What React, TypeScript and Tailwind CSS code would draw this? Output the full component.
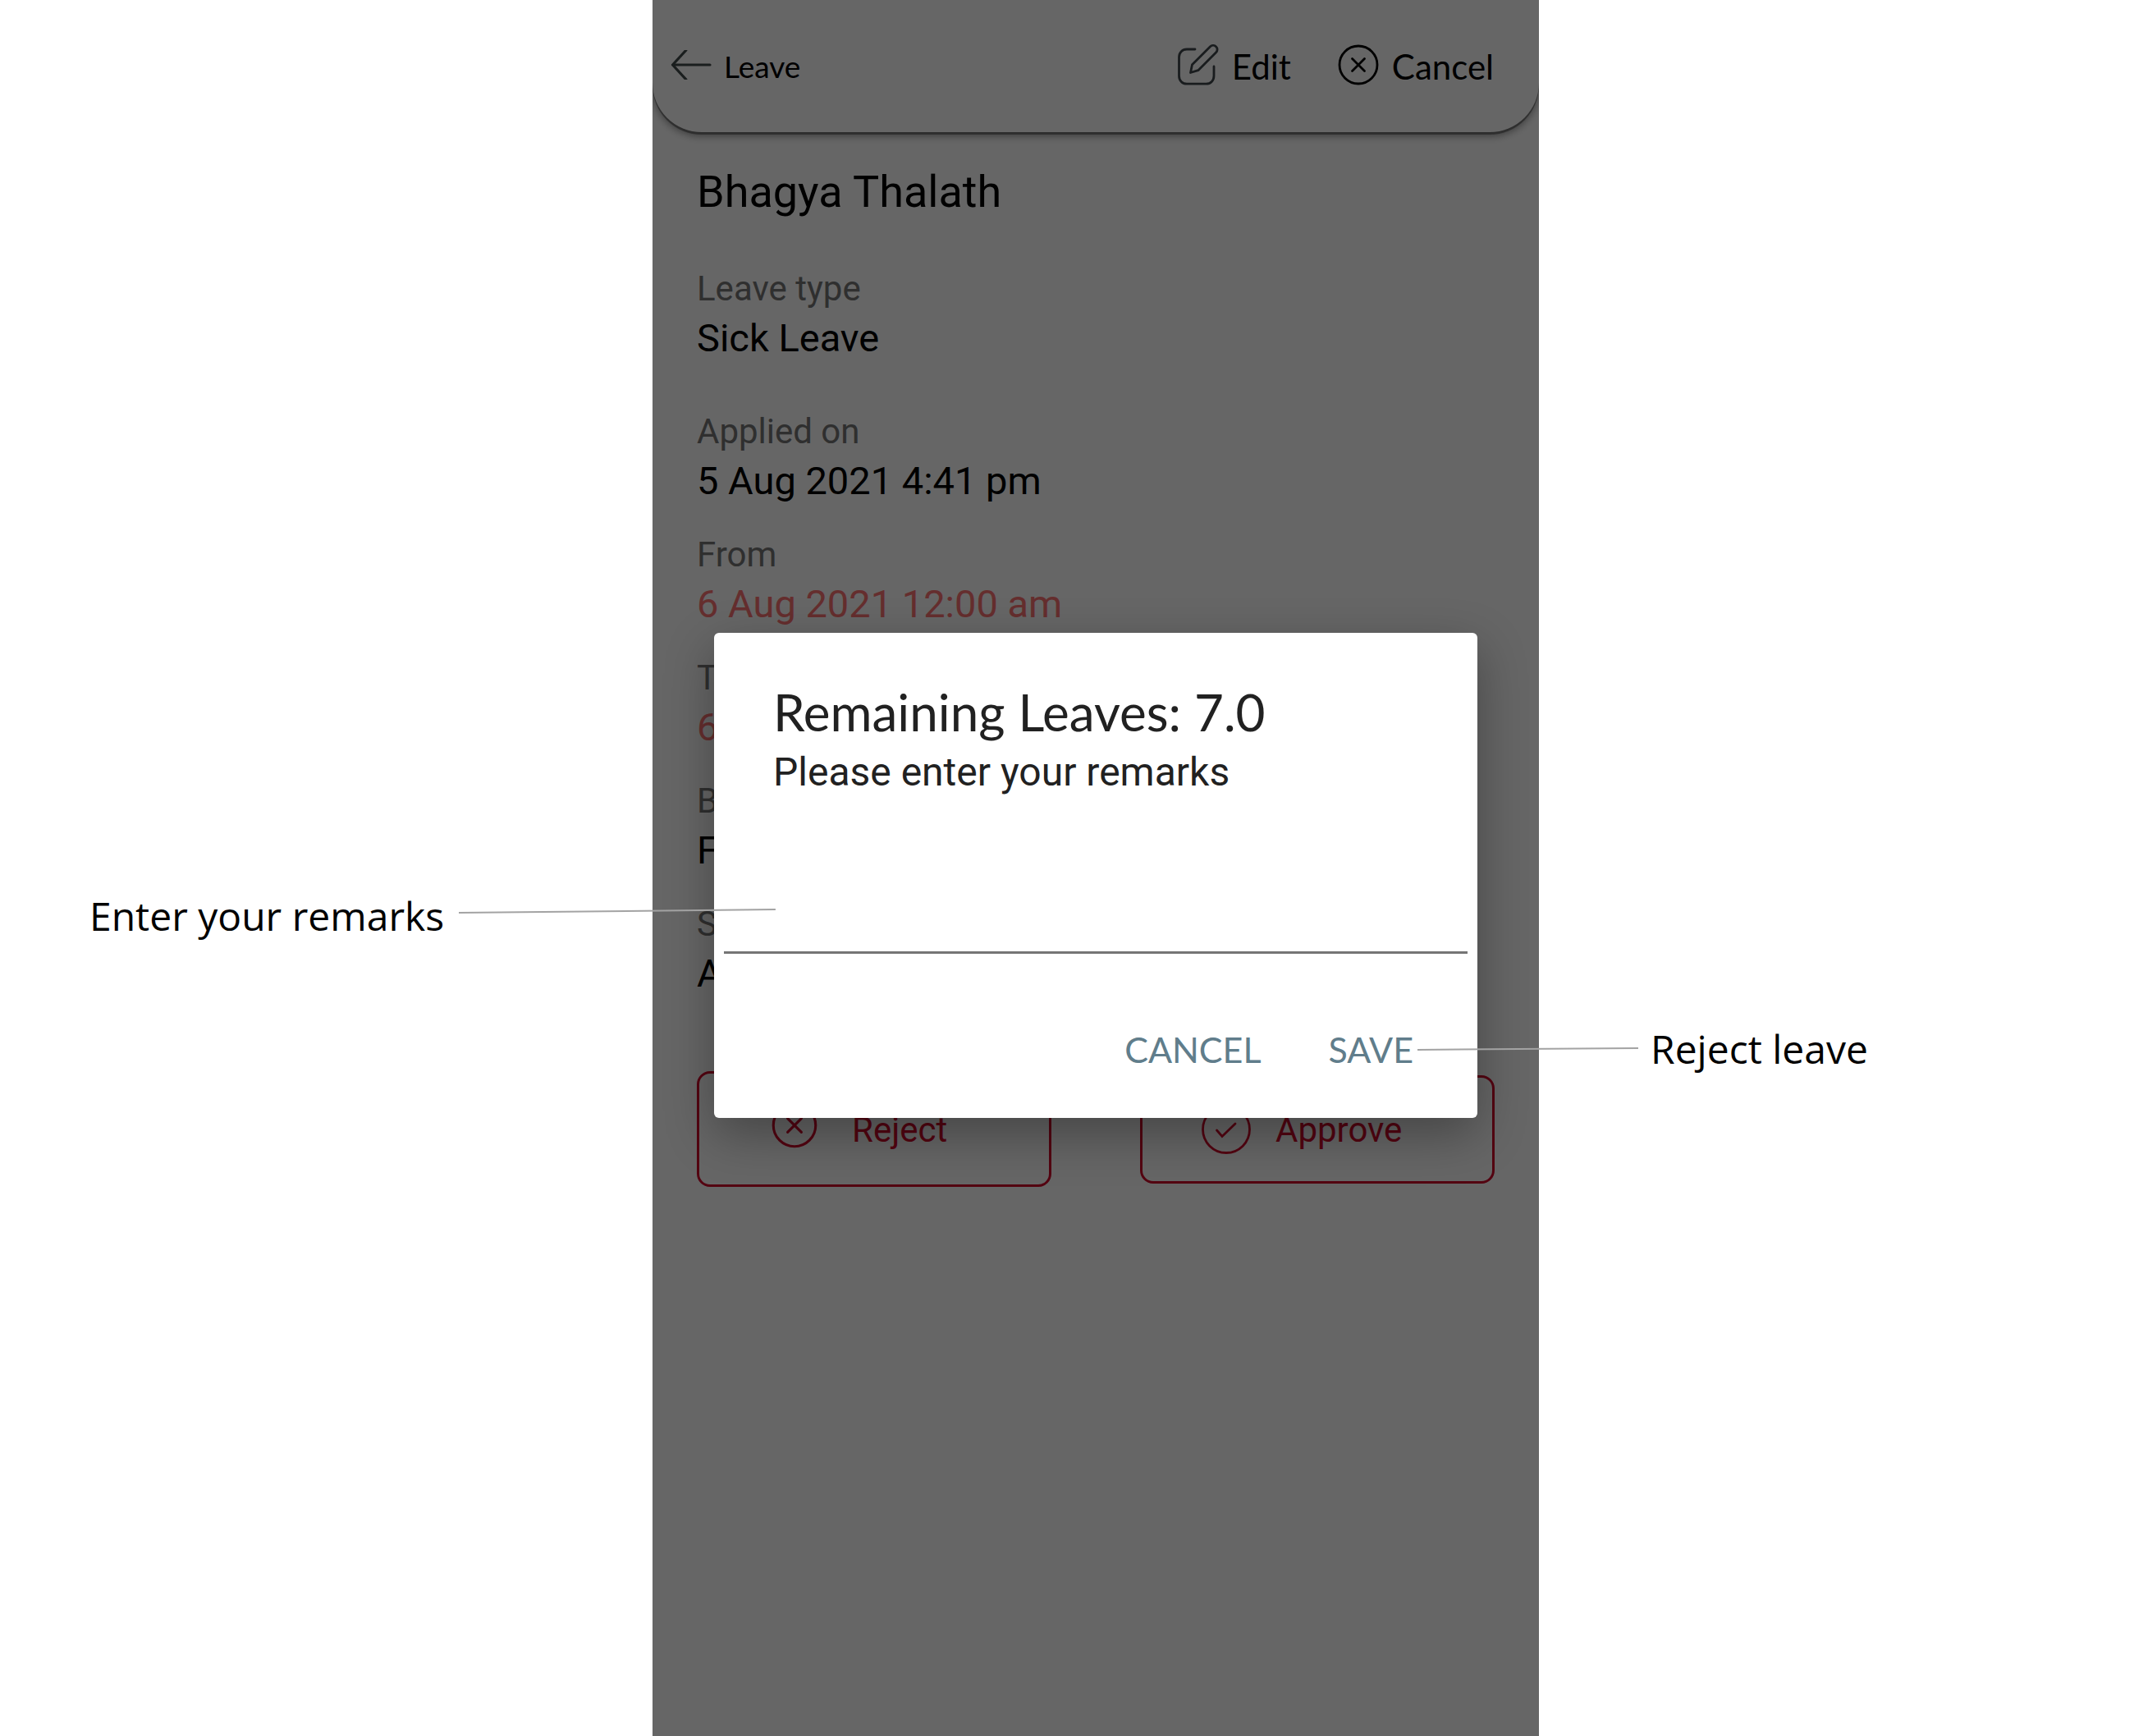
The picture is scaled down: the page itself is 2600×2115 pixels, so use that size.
import type { ReactNode } from "react";

function ArrowLeftIcon() {
  return (
    <svg className="mb-1 h-9 w-[50px] shrink-0" viewBox="0 0 50 36" fill="none" stroke="#434b4b" strokeWidth="3.200" aria-hidden="true">
      <path d="M48 18H3" strokeLinecap="round" />
      <path d="M19.500 -0.500L2.500 18L19.500 36.500" strokeLinejoin="round" />
    </svg>
  );
}

function EditIcon() {
  return (
    <svg className="mb-1 size-[50px] shrink-0" viewBox="0 0 50 50" fill="none" stroke="#40484c" strokeWidth="2.800" strokeLinecap="round" strokeLinejoin="round" aria-hidden="true">
      <path d="M21 6H11C5.500 6 1.500 10 1.500 15.500V38.500C1.500 44 5.500 48.200 11 48.200H34.500C40 48.200 44 44 44 38.500V27" />
      <path d="M39.500 2.800C41.500 0.900 44.600 0.900 46.500 2.800C48.600 4.700 48.600 7.800 46.700 9.700L24.800 31.700L15.500 34.500L17.500 24.800Z" />
    </svg>
  );
}

function CircleXIcon({ className }: { className: string }) {
  return (
    <svg className={className} viewBox="0 0 50 50" fill="none" stroke="currentColor" strokeWidth="2.800" strokeLinecap="round" aria-hidden="true">
      <circle cx="25" cy="25" r="23" />
      <path d="M17.500 17.500L32.500 32.500M32.500 17.500L17.500 32.500" />
    </svg>
  );
}

function CircleCheckIcon({ className }: { className: string }) {
  return (
    <svg className={className} viewBox="0 0 60 60" fill="none" stroke="currentColor" strokeWidth="2.800" strokeLinecap="round" aria-hidden="true">
      <circle cx="30" cy="30" r="28.500" />
      <path d="M18.500 31L25 38.500L41 23" />
    </svg>
  );
}

function Field({ label, value, tone = "text-black" }: { label: string; value: string; tone?: string }) {
  return (
    <div>
      <dt className="text-[42px] leading-[56px] text-[#757575]">{label}</dt>
      <dd className={"text-[47px] leading-[64px] " + tone}>{value}</dd>
    </div>
  );
}

function Pointer({ className, children }: { className: string; children: ReactNode }) {
  return (
    <svg className={className} viewBox="0 0 100 6" preserveAspectRatio="none" fill="none" stroke="#a3a3a3" strokeWidth="2" aria-hidden="true">
      {children}
    </svg>
  );
}

export default function App() {
  return (
    <div className="grid min-h-screen grid-cols-[795fr_1080fr_725fr] overflow-x-hidden bg-white font-['Roboto',sans-serif] text-black">
      <aside className="relative z-10 flex items-center gap-[18px] pt-[117px] pl-[109px] font-['Open_Sans',sans-serif]">
        <p className="shrink-0 text-[48px] leading-[64px]">Enter your remarks</p>
        <Pointer className="-mr-[150px] mb-3 h-1.5 flex-1">
          <path d="M0 5L100 1" vectorEffect="non-scaling-stroke" />
        </Pointer>
      </aside>

      <main className="relative overflow-hidden bg-white">
        <header className="flex h-[161px] items-center justify-between rounded-b-[60px] bg-white pr-[55px] pl-[22px] font-['Lato',sans-serif] shadow-[0_3px_0_rgba(0,0,0,0.35),0_5px_10px_rgba(0,0,0,0.4)]">
          <button type="button" className="flex items-center gap-[15px] text-[37px] leading-[56px]">
            <ArrowLeftIcon />
            Leave
          </button>
          <div className="flex items-center gap-[57px] text-[42px] leading-[56px]">
            <button type="button" className="flex items-center gap-4">
              <EditIcon />
              Edit
            </button>
            <button type="button" className="flex items-center gap-4">
              <CircleXIcon className="mb-1 size-[50px] shrink-0" />
              Cancel
            </button>
          </div>
        </header>

        <section className="px-[54px] pt-[41px]">
          <h1 className="text-[54px] leading-[64px]">Bhagya Thalath</h1>
          <dl className="mt-[58px] flex flex-col gap-[30px]">
            <div className="mb-6">
              <Field label="Leave type" value="Sick Leave" />
            </div>
            <Field label="Applied on" value="5 Aug 2021 4:41 pm" />
            <Field label="From" value="6 Aug 2021 12:00 am" tone="text-[#fc7474]" />
            <Field label="To" value="6 Aug 2021 12:00 am" tone="text-[#fc7474]" />
            <Field label="Break" value="Full Day" />
            <Field label="Status" value="Applied" />
          </dl>
          <div className="mt-[87px] grid grid-cols-2 items-center gap-[108px] text-[42px] leading-[56px] text-[#d30a2c]">
            <button type="button" className="flex h-[141px] items-center gap-[42px] rounded-2xl border-3 border-current pt-0.5 pl-[88px]">
              <CircleXIcon className="mb-3 size-[56px] shrink-0" />
              Reject
            </button>
            <button type="button" className="flex h-[132px] items-center gap-[30px] rounded-2xl border-3 border-current pt-0.5 pl-[72px]">
              <CircleCheckIcon className="mb-0.5 size-[60px] shrink-0" />
              Approve
            </button>
          </div>
        </section>

        <div className="absolute inset-0 flex items-center justify-center bg-black/60 px-[75px] pt-[18px]">
          <form role="dialog" aria-labelledby="dialog-title" className="w-full rounded-md bg-white pt-[60px] pb-[55px] text-[#212121] shadow-[0_20px_60px_rgba(0,0,0,0.32)]">
            <h2 id="dialog-title" className="px-[72px] font-['Lato',sans-serif] text-[62px] leading-[72px]">
              Remaining Leaves: 7.0
            </h2>
            <label htmlFor="remarks" className="mt-[6px] block px-[72px] text-[48px] leading-[64px]">
              Please enter your remarks
            </label>
            <div className="px-3">
              <textarea id="remarks" className="block h-[189px] w-full resize-none border-b-3 border-[#757575] px-[60px] pt-[90px] text-[48px] leading-[64px] outline-none" />
            </div>
            <div className="mt-[89px] flex justify-end gap-[82px] pr-[78px] font-['Lato',sans-serif] text-[43px] leading-[56px] text-[#607d8b]">
              <button type="button">CANCEL</button>
              <button type="button">SAVE</button>
            </div>
          </form>
        </div>
      </main>

      <aside className="relative z-10 flex items-center gap-[15px] pt-[441px] font-['Open_Sans',sans-serif]">
        <Pointer className="-ml-[148px] h-1.5 w-[269px] shrink-0">
          <path d="M0 4L100 2" vectorEffect="non-scaling-stroke" />
        </Pointer>
        <p className="text-[48px] leading-[64px]">Reject leave</p>
      </aside>
    </div>
  );
}
